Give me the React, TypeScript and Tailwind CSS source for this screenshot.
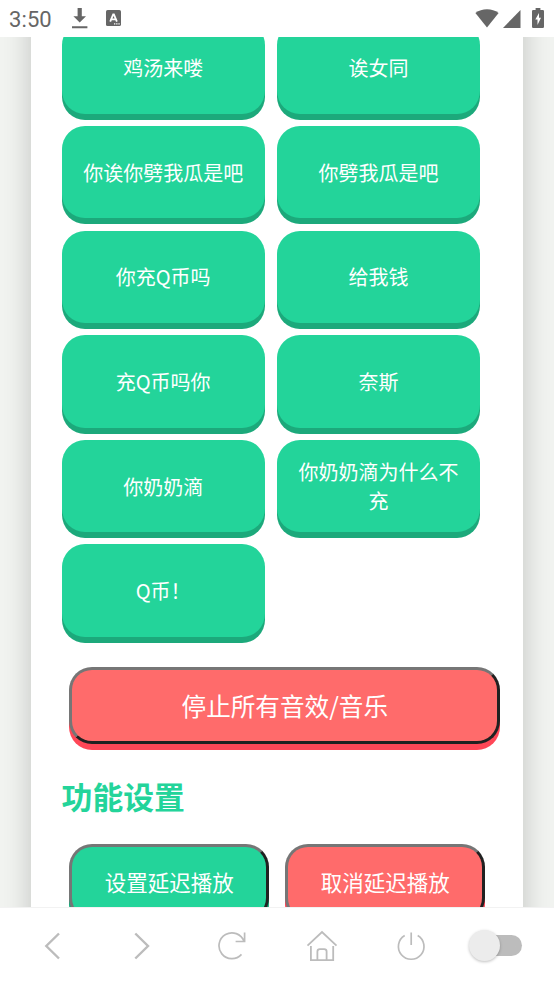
const sounds = [
  '鸡汤来喽',
  '诶女同',
  '你诶你劈我瓜是吧',
  '你劈我瓜是吧',
  '你充Q币吗',
  '给我钱',
  '充Q币吗你',
  '奈斯',
  '你奶奶滴',
  '你奶奶滴为什么不充',
  'Q币！',
];

function StatusBar() {
  return (
    <header className="flex h-[37px] shrink-0 items-center bg-white text-[#666666]">
      <span className="mt-[2px] ml-[9px] w-[62px] font-['Roboto',sans-serif] text-[22px] leading-none tracking-[0.1px]">
        3:50
      </span>
      <svg className="mb-[1px] h-[22px] w-[17px]" viewBox="0 0 17 22" fill="currentColor">
        <path d="M6.600 1h4.200v8.200H15L8.700 15.600 2.400 9.200h4.200zM1 19.200h15.400v2H1z" />
      </svg>
      <svg className="mb-[1px] ml-[18px] h-[16px] w-[15px]" viewBox="0 0 15 16">
        <rect width="15" height="16" rx="1.6" fill="currentColor" />
        <path d="M4.200 11.600 7.200 4.300h.7l3 7.300M5.400 9.300h4.300" fill="none" stroke="white" strokeWidth="1.8" />
        <path d="M8 13.200h1.300v1.200H8zM10.200 13.200h1.300v1.200h-1.300zM12.400 13.200h1.300v1.200h-1.300z" fill="white" />
      </svg>
      <svg className="mb-[1px] ml-auto h-[19px] w-[24px]" viewBox="0 0 24 19" fill="currentColor">
        <path d="M.4 4Q5.500.3 12 .3T23.600 4L12 18.600z" />
      </svg>
      <svg className="ml-[4px] h-[18px] w-[18px]" viewBox="0 0 18 18" fill="currentColor">
        <path d="M17.500 0v18H0z" />
      </svg>
      <svg className="mr-[10px] mb-[1px] ml-[11px] h-[20px] w-[12px]" viewBox="0 0 12 20">
        <path
          d="M3.600 0h4.800v2h2.400q1.200 0 1.200 1.200v15.600q0 1.200-1.200 1.200H1.200Q0 20 0 18.800V3.200Q0 2 1.200 2h2.400z"
          fill="currentColor"
        />
        <path d="M7 5 3.300 11.600h2.200V17l3.500-7.200H7z" fill="white" />
      </svg>
    </header>
  );
}

function SoundButton({ label }: { label: string }) {
  return (
    <button
      type="button"
      className="flex h-[92.33px] w-[203.13px] items-center justify-center rounded-[23px] bg-[#23d49a] px-[15.4px] text-center text-[20px] leading-[29px] text-white shadow-[0_6px_0_#1ca97b]"
    >
      {label}
    </button>
  );
}

function BottomNav() {
  return (
    <nav className="flex h-[77px] shrink-0 items-center border-t border-[#f2f2f2] bg-white pb-[1px] text-[#bcbcbc]">
      <svg className="ml-[38px] size-[30px]" viewBox="0 0 30 30" fill="none" stroke="currentColor" strokeWidth="2.4">
        <path d="M21 2.500 8.300 15 21 27.500" />
      </svg>
      <svg className="ml-[59px] size-[30px]" viewBox="0 0 30 30" fill="none" stroke="currentColor" strokeWidth="2.4">
        <path d="M8.300 2.500 21 15 8.300 27.500" />
      </svg>
      <svg className="ml-[60px] size-[30px]" viewBox="0 0 30 30" fill="none" stroke="currentColor" strokeWidth="1.7">
        <path d="M24.500 23.400A12.900 12.900 0 1 1 27 10.300M27.600 1.500v9h-9" />
      </svg>
      <svg className="ml-[59px] size-[32px]" viewBox="0 0 32 32" fill="none" stroke="currentColor" strokeWidth="1.8">
        <path d="M1.500 15.700 16 2l14.500 13.700M4.900 16v14.200h22.300V16M11.400 30V21.600q0-2.400 2.400-2.400h4.400q2.400 0 2.400 2.400V30" />
      </svg>
      <svg className="ml-[58px] size-[30px]" viewBox="0 0 30 30" fill="none" stroke="currentColor" strokeWidth="1.7">
        <path d="M15.200 1.500v12.500M8.700 4.400a12.800 12.800 0 1 0 13 0" />
      </svg>
      <div className="ml-[43px] flex h-[21px] w-[53px] items-center rounded-full bg-linear-to-r from-transparent from-30% to-[#bcbcbc] to-30%">
        <span className="size-[31px] shrink-0 rounded-full bg-[#ececec] shadow-[0_1px_3px_rgba(0,0,0,0.25)]" />
      </div>
    </nav>
  );
}

export default function App() {
  return (
    <div className="flex h-[984px] w-[554px] flex-col overflow-hidden bg-white font-['Noto_Sans_CJK_SC',sans-serif]">
      <StatusBar />
      <main className="min-h-0 flex-1 overflow-hidden bg-[#f1f3f0]">
        <div className="mx-[31px] -mt-[46px] h-[960px] bg-white pt-[30.5px] pl-[30.6px] shadow-[0_0_26px_rgba(0,0,0,0.2)]">
          <div className="grid grid-cols-[203.13px_203.13px] gap-x-[12.31px] gap-y-[12.28px]">
            {sounds.map((label) => (
              <SoundButton key={label} label={label} />
            ))}
          </div>

          <button
            type="button"
            className="mt-[30px] ml-[7.7px] block h-[77px] w-[431px] rounded-[23px] border-3 border-t-[#767676] border-r-[#212121] border-b-[#212121] border-l-[#767676] bg-[#ff6b6b] text-[24.6px] text-white shadow-[0_6px_0_#ff4757]"
          >
            停止所有音效/音乐
          </button>

          <h2 className="mt-[29.3px] text-[30.8px] leading-[45px] font-bold text-[#23d49a]">功能设置</h2>

          <div className="mt-[25.6px] ml-[7.7px] flex gap-[16px]">
            <button
              type="button"
              className="h-[77px] w-[200px] rounded-[23px] border-3 border-t-[#767676] border-r-[#212121] border-b-[#212121] border-l-[#767676] bg-[#23d49a] text-[21.5px] text-white shadow-[0_6px_0_#1ca97b]"
            >
              设置延迟播放
            </button>
            <button
              type="button"
              className="h-[77px] w-[200px] rounded-[23px] border-3 border-t-[#767676] border-r-[#212121] border-b-[#212121] border-l-[#767676] bg-[#ff6b6b] text-[21.5px] text-white shadow-[0_6px_0_#ff4757]"
            >
              取消延迟播放
            </button>
          </div>
        </div>
      </main>
      <BottomNav />
    </div>
  );
}
